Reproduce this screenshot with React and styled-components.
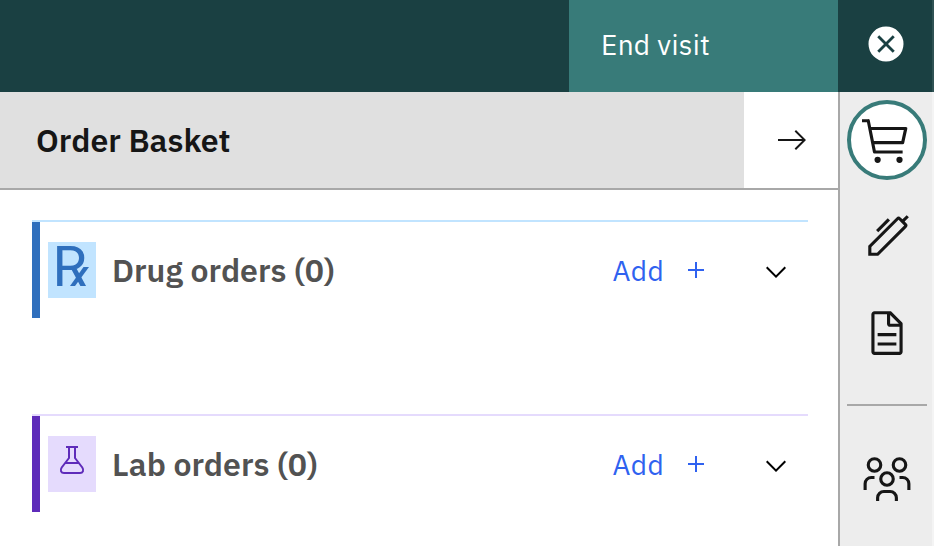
import React from 'react';
import styled, { createGlobalStyle } from 'styled-components';

const Global = createGlobalStyle`
  * { box-sizing: border-box; }
  body { margin: 0; background: #fff; overflow: hidden; font-family: "IBM Plex Sans", "Noto Sans", sans-serif; }
  button { font: inherit; color: inherit; background: none; border: 0; padding: 0; margin: 0; cursor: pointer; }
  svg { display: block; flex: none; overflow: visible; }
`;

const Page = styled.div`
  width: 934px;
  height: 546px;
  display: grid;
  grid-template: 92px 1fr / 838px 96px;
  overflow: hidden;
`;

const TopBar = styled.header`
  grid-column: 1 / -1;
  display: flex;
  justify-content: flex-end;
  background: #1a4042;
`;

const EndVisit = styled.button`
  width: 269px;
  padding: 0 0 4px 32px;
  display: flex;
  align-items: center;
  background: #387b79;
  color: #fff;
  font-size: 28px;
  letter-spacing: 0.32px;
`;

const CloseButton = styled.button`
  width: 96px;
  padding: 0 0 4px 28px;
  display: flex;
  align-items: center;
  color: #fff;
  border-right: 2px solid #2f5254;
`;

const Workspace = styled.main`
  display: flex;
  flex-direction: column;
  background: #fff;
`;

const WorkspaceHeader = styled.div`
  height: 98px;
  display: flex;
  border-bottom: 2px solid #a8a8a8;
`;

const Title = styled.h1`
  width: 744px;
  margin: 0;
  padding-left: 36px;
  background: #e0e0e0;
  color: #161616;
  font-size: 32px;
  line-height: 96px;
  font-weight: 600;
`;

const HideButton = styled.button`
  flex: 1;
  padding-left: 32px;
  display: flex;
  align-items: center;
  color: #161616;
`;

const Sections = styled.div`
  padding: 30px 30px 0 32px;
  display: grid;
  gap: 96px;
`;

const Section = styled.section`
  height: 98px;
  display: flex;
  border-top: 2px solid ${(p) => p.$tint};
`;

const Accent = styled.div`
  width: 8px;
  background: ${(p) => p.$color};
`;

const IconTile = styled.div`
  width: 48px;
  height: 56px;
  margin: 20px 16px 0 8px;
  background: ${(p) => p.$tint};
  color: ${(p) => p.$color};
`;

const SectionTitle = styled.h2`
  width: 500px;
  margin: 0;
  color: #525252;
  font-size: 32px;
  line-height: 96px;
  font-weight: 600;
`;

const AddButton = styled.button`
  width: 148px;
  height: 96px;
  display: flex;
  align-items: center;
  color: #2f62f0;
  font-size: 28px;
`;

const AddLabel = styled.span`
  width: 68px;
  text-align: left;
  line-height: 36px;
  padding: 2px 0 0 0.6px;
  letter-spacing: 0.32px;
`;

const Toggle = styled.button`
  height: 100px;
  display: flex;
  align-items: center;
  color: #000;
`;

const Rail = styled.nav`
  display: flex;
  flex-direction: column;
  align-items: flex-start;
  padding: 8px 0 0 7px;
  background: #ededed;
  border-left: 2px solid #a8a8a8;
  border-right: 2px solid #f4f4f4;
`;

const RailButton = styled.button`
  width: 80px;
  height: 80px;
  margin-bottom: 16px;
  padding-top: 2px;
  display: grid;
  place-items: center;
  border-radius: 50%;
  color: #161616;
  background: ${(p) => (p.$active ? '#fff' : 'transparent')};
  border: 4px solid ${(p) => (p.$active ? '#387b79' : 'transparent')};
`;

const Divider = styled.hr`
  width: 80px;
  height: 2px;
  margin: 16px 0 32px;
  border: 0;
  background: #a8a8a8;
`;

const Icon = ({ size = 50, box = 32, children }) => (
  <svg width={size} height={size} viewBox={`0 0 ${box} ${box}`} fill="currentColor" aria-hidden="true">
    {children}
  </svg>
);

const CloseFilled = () => (
  <Icon size={40}>
    <path d="M16,2A14,14,0,1,0,30,16,14,14,0,0,0,16,2Zm5.4,21L16,17.6,10.6,23,9,21.4,14.4,16,9,10.6,10.6,9,16,14.4,21.4,9,23,10.6,17.6,16,23,21.4Z" />
  </Icon>
);

const ArrowRight = () => (
  <Icon size={32} box={16}>
    <path d="M9.3 3.7 13.1 7.5H1v1h12.1L9.3 12.3l.7.7 5-5-5-5z" />
  </Icon>
);

const Plus = () => (
  <Icon size={32} box={16}>
    <path d="M8.5 7.5V4h-1v3.5H4v1h3.5V12h1V8.5H12v-1z" />
  </Icon>
);

const ChevronDown = () => (
  <Icon size={32} box={16}>
    <path d="M8 11 3 6l.7-.7L8 9.6l4.3-4.3.7.7z" />
  </Icon>
);

const Cart = () => (
  <Icon>
    <circle cx="10" cy="28" r="2" />
    <circle cx="24" cy="28" r="2" />
    <path d="M28,7H5.82L5,2.8A1,1,0,0,0,4,2H0V4H3.18L7,23.2A1,1,0,0,0,8,24H26V22H8.82L8,18H26a1,1,0,0,0,1-.78l2-9A1,1,0,0,0,28,7ZM25.2,16H7.62l-1.4-7H26.75Z" />
  </Icon>
);

const Pen = () => (
  <Icon>
    <path d="M27.307,6.107,30,3.414,28.586,2,25.893,4.693,24.8,3.6a1.933,1.933,0,0,0-2.8,0l-18,18V28h6.4l18-18a1.933,1.933,0,0,0,0-2.8ZM9.6,26H6V22.4L23.4,5,27,8.6Z" />
    <path d="M9.7 12.2 17.2 4.7" stroke="currentColor" strokeWidth="2" />
  </Icon>
);

const Document = () => (
  <Icon>
    <path d="M25.7,9.3l-7-7C18.5,2.1,18.3,2,18,2H8C6.9,2,6,2.9,6,4v24c0,1.1,0.9,2,2,2h16c1.1,0,2-0.9,2-2V10C26,9.7,25.9,9.5,25.7,9.3z M18,4.4l5.6,5.6H18V4.4z M24,28H8V4h8v6c0,1.1,0.9,2,2,2h6V28z" />
    <path d="M10 22h12v2H10zM10 16h12v2H10z" />
  </Icon>
);

const Patients = () => (
  <Icon>
    <g fill="none" stroke="currentColor" strokeWidth="2">
      <circle cx="8" cy="7" r="4" />
      <circle cx="24" cy="7" r="4" />
      <circle cx="16" cy="16" r="4" />
      <path d="M8 15H6a4 4 0 0 0-4 4v4M24 15h2a4 4 0 0 1 4 4v4M10 30v-2a4 4 0 0 1 4-4h4a4 4 0 0 1 4 4v2" />
    </g>
  </Icon>
);

const RxText = styled.text`
  font-family: Roboto, sans-serif;
  font-size: 56px;
`;

const Prescription = () => (
  <svg width="48" height="56" viewBox="0 0 48 56" fill="currentColor" role="img" aria-label="Prescription">
    <RxText x="4.5" y="44">R</RxText>
    <path d="M35.5 25H41L27 44H22z" />
  </svg>
);

const Flask = () => (
  <svg width="48" height="56" viewBox="0 0 48 56" fill="none" stroke="currentColor" strokeWidth="2" aria-hidden="true">
    <path d="M18 11h12M21 11v11l-7.3 9.5c-1.9 2.8-.6 5.500 2.300 5.500h16c2.900 0 4.200-2.700 2.300-5.500L27 22V11M17 27h14" />
  </svg>
);

const OrderSection = ({ title, color, tint, children }) => (
  <Section $tint={tint}>
    <Accent $color={color} />
    <IconTile $tint={tint} $color={color}>{children}</IconTile>
    <SectionTitle>{title}</SectionTitle>
    <AddButton><AddLabel>Add</AddLabel><Plus /></AddButton>
    <Toggle aria-label="Expand"><ChevronDown /></Toggle>
  </Section>
);

export default function App() {
  return (
    <Page>
      <Global />
      <TopBar>
        <EndVisit>End visit</EndVisit>
        <CloseButton aria-label="Close"><CloseFilled /></CloseButton>
      </TopBar>
      <Workspace>
        <WorkspaceHeader>
          <Title>Order Basket</Title>
          <HideButton aria-label="Hide"><ArrowRight /></HideButton>
        </WorkspaceHeader>
        <Sections>
          <OrderSection title="Drug orders (0)" color="#2f6fbd" tint="#c1e4ff"><Prescription /></OrderSection>
          <OrderSection title="Lab orders (0)" color="#5e2bba" tint="#e5dbfd"><Flask /></OrderSection>
        </Sections>
      </Workspace>
      <Rail>
        <RailButton $active aria-label="Orders"><Cart /></RailButton>
        <RailButton aria-label="Notes"><Pen /></RailButton>
        <RailButton aria-label="Forms"><Document /></RailButton>
        <Divider />
        <RailButton aria-label="Patients"><Patients /></RailButton>
      </Rail>
    </Page>
  );
}
